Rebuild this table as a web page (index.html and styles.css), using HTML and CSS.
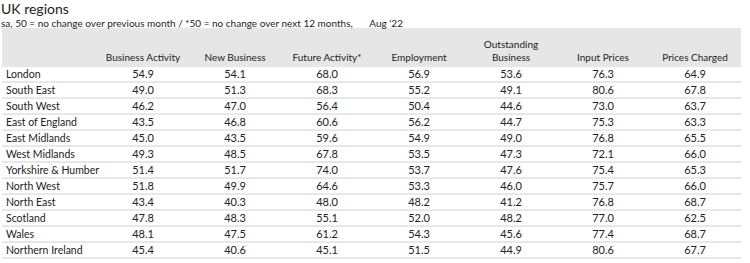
FILE: index.html
```html
<!DOCTYPE html>
<html>
<head>
    <title>UK regions</title>
    <link rel="stylesheet" href="styles.css">
</head>
<body>
    <div class="panel">
        <h1>UK regions</h1>
        <p class="note">sa, 50 = no change over previous month / *50 = no change over next 12 months, <span class="date">Aug '22</span></p>

        <table class="regions">
            <thead>
                <tr>
                    <th class="name"></th>
                    <th>Business Activity</th>
                    <th>New Business</th>
                    <th>Future Activity*</th>
                    <th>Employment</th>
                    <th>Outstanding<br>Business</th>
                    <th>Input Prices</th>
                    <th>Prices Charged</th>
                </tr>
            </thead>
            <tbody>
                <tr><td class="name">London</td><td>54.9</td><td>54.1</td><td>68.0</td><td>56.9</td><td>53.6</td><td>76.3</td><td>64.9</td></tr>
                <tr><td class="name">South East</td><td>49.0</td><td>51.3</td><td>68.3</td><td>55.2</td><td>49.1</td><td>80.6</td><td>67.8</td></tr>
                <tr><td class="name">South West</td><td>46.2</td><td>47.0</td><td>56.4</td><td>50.4</td><td>44.6</td><td>73.0</td><td>63.7</td></tr>
                <tr><td class="name">East of England</td><td>43.5</td><td>46.8</td><td>60.6</td><td>56.2</td><td>44.7</td><td>75.3</td><td>63.3</td></tr>
                <tr><td class="name">East Midlands</td><td>45.0</td><td>43.5</td><td>59.6</td><td>54.9</td><td>49.0</td><td>76.8</td><td>65.5</td></tr>
                <tr><td class="name">West Midlands</td><td>49.3</td><td>48.5</td><td>67.8</td><td>53.5</td><td>47.3</td><td>72.1</td><td>66.0</td></tr>
                <tr><td class="name">Yorkshire &amp; Humber</td><td>51.4</td><td>51.7</td><td>74.0</td><td>53.7</td><td>47.6</td><td>75.4</td><td>65.3</td></tr>
                <tr><td class="name">North West</td><td>51.8</td><td>49.9</td><td>64.6</td><td>53.3</td><td>46.0</td><td>75.7</td><td>66.0</td></tr>
                <tr><td class="name">North East</td><td>43.4</td><td>40.3</td><td>48.0</td><td>48.2</td><td>41.2</td><td>76.8</td><td>68.7</td></tr>
                <tr><td class="name">Scotland</td><td>47.8</td><td>48.3</td><td>55.1</td><td>52.0</td><td>48.2</td><td>77.0</td><td>62.5</td></tr>
                <tr><td class="name">Wales</td><td>48.1</td><td>47.5</td><td>61.2</td><td>54.3</td><td>45.6</td><td>77.4</td><td>68.7</td></tr>
                <tr><td class="name">Northern Ireland</td><td>45.4</td><td>40.6</td><td>45.1</td><td>51.5</td><td>44.9</td><td>80.6</td><td>67.7</td></tr>
            </tbody>
        </table>
    </div>
</body>
</html>
```

FILE: styles.css
```css
* {
    -webkit-print-color-adjust: exact;
    print-color-adjust: exact;
}

body {
    margin: 0;
    background-color: #fff;
    color: #222;
    font-family: Lato, "Open Sans", sans-serif;
}

.panel {
    padding: 1px 0 0 1px;
}

h1 {
    margin: 0;
    font-size: 14px;
    font-weight: normal;
    line-height: 16px;
}

.note {
    margin: 1px 0 0 0;
    font-size: 10px;
    line-height: 10px;
    white-space: nowrap;
}

.note .date {
    margin-left: 14px;
}

.regions {
    margin: 0 0 0 1px;
    width: 739px;
    border-collapse: separate;
    border-spacing: 0;
    table-layout: fixed;
    font-size: 11px;
}

.regions th {
    width: 92px;
    height: 36px;
    padding: 0 0 3px 0;
    background-color: rgb(230, 230, 230);
    font-size: 10px;
    font-weight: normal;
    vertical-align: bottom;
    text-align: center;
    line-height: 13px;
    white-space: nowrap;
}

.regions th.name {
    width: 95px;
}

.regions td {
    height: 14px;
    padding: 0;
    border-bottom: 2px solid rgb(232, 232, 232);
    text-align: center;
    line-height: 14px;
    white-space: nowrap;
}

.regions td.name {
    padding-left: 4px;
    font-size: 10.5px;
    text-align: left;
}
```
